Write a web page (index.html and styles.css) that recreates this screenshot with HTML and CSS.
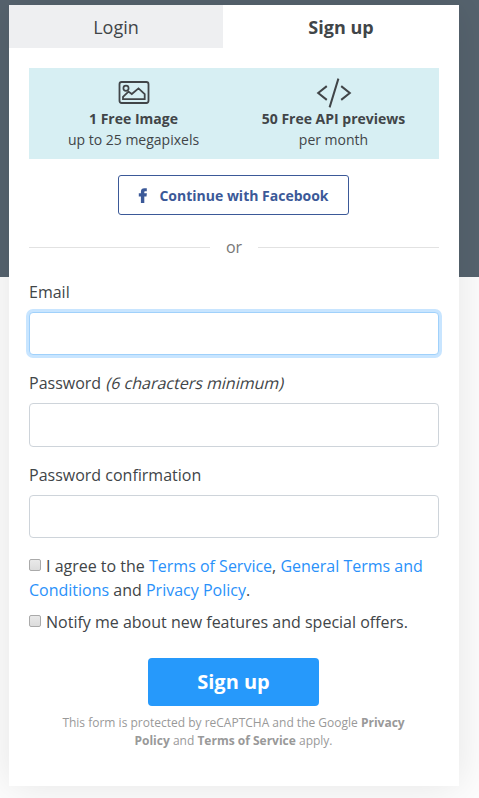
FILE: index.html
```html
<!DOCTYPE html>
<html lang="en">
<head>
<meta charset="utf-8">
<title>Sign up</title>
<link rel="stylesheet" href="styles.css">
</head>
<body>
<main class="card">
  <nav class="tabs">
    <a class="tab">Login</a>
    <a class="tab tab-active">Sign up</a>
  </nav>
  <div class="content">
    <section class="offers">
      <div class="offer">
        <svg class="offer-icon" width="32" height="30" viewBox="0 0 32 30" fill="none" stroke="#414548">
          <rect x="1.5" y="4" width="29" height="21" rx="2.2" stroke-width="1.8"/>
          <circle cx="8" cy="10.2" r="2.6" stroke-width="1.7"/>
          <path d="M5 21.1v-2.2l5.5-5.3 3.3 2.4 6.7-5.6 6.2 5.7v5z" stroke-width="1.8"/>
        </svg>
        <strong>1 Free Image</strong>
        <span>up to 25 megapixels</span>
      </div>
      <div class="offer">
        <svg class="offer-icon" width="36" height="30" viewBox="0 0 36 30" fill="none" stroke="#414548" stroke-width="2">
          <path d="M10.8 8.1L2.2 15l8.6 6.9M25.2 8.1l8.6 6.9-8.6 6.9M22.4.6l-8.8 28.8"/>
        </svg>
        <strong>50 Free API previews</strong>
        <span>per month</span>
      </div>
    </section>
    <button class="facebook" type="button">
      <svg width="10" height="15" viewBox="0 0 10 15" fill="#3b5998"><path d="M2.9 15V8.4H.8V5.3h2.1V3.7C2.9 1.4 4.2.3 6.4.3h2.4v2.9H7.5c-1 0-1.2.4-1.2 1.1v1h2.6l-.4 3.1H6.3V15z"/></svg>
      <span class="facebook-text">Continue with Facebook</span>
    </button>
    <div class="divider">or</div>
    <form class="form">
      <label for="email">Email</label>
      <input class="field field-focus" id="email" type="text">
      <label for="password">Password <em class="hint">(6 characters minimum)</em></label>
      <input class="field" id="password" type="password">
      <label for="confirm">Password confirmation</label>
      <input class="field" id="confirm" type="password">
      <p class="check"><input class="box" type="checkbox">I agree to the <a>Terms of Service</a>, <a>General Terms and Conditions</a> and <a>Privacy Policy</a>.</p>
      <p class="check"><input class="box" type="checkbox">Notify me about new features and special offers.</p>
      <button class="submit" type="button">Sign up</button>
      <p class="legal">This form is protected by reCAPTCHA and the Google <b>Privacy Policy</b> and <b>Terms of Service</b> apply.</p>
    </form>
  </div>
</main>
</body>
</html>
```
FILE: styles.css
```css
* { box-sizing: border-box; }
html { overflow: hidden; background: #fdfdfd; }
body {
  margin: 0;
  padding: 5px 20px 12px 9px;
  height: 798px;
  background: linear-gradient(#56636e 277px, #fdfdfd 277px);
  color: #414548;
  font: 16px/24px "Open Sans", sans-serif;
}
.card {
  width: 450px;
  height: 781px;
  background: #fff;
  box-shadow: 0 0 40px rgba(0, 0, 0, .1);
}
.tabs { display: flex; height: 43px; }
.tab {
  width: 214px;
  background: #eeeff1;
  font-size: 18px;
  line-height: 44px;
  text-align: center;
}
.tab-active { width: 236px; background: #fff; font-weight: 700; }
.content { padding: 20px 20px 0; }
.offers {
  display: flex;
  height: 91px;
  padding: 10px 5px 0;
  background: #d7eff3;
  font-size: 14px;
  line-height: 21px;
}
.offer {
  display: flex;
  flex: 1;
  flex-direction: column;
  align-items: center;
  margin-left: -1px;
  white-space: nowrap;
}
.offer-icon { flex: none; }
.offer strong { font-weight: 700; }
.facebook {
  display: flex;
  align-items: center;
  justify-content: center;
  gap: 11px;
  width: 231px;
  height: 40px;
  margin: 16px auto 0 89px;
  padding: 0;
  border: 1px solid #3b5998;
  border-radius: 3px;
  background: #fff;
  color: #3b5998;
  font: 700 14px/20px "Open Sans", sans-serif;
}
.facebook-text { padding-top: 2px; }
.divider {
  display: flex;
  align-items: center;
  gap: 16px;
  height: 24px;
  margin: 20px 0 21px;
  color: #777;
}
.divider::before, .divider::after { content: ""; flex: 1; height: 1px; background: #e2e2e2; }
.form label { display: block; margin-bottom: 8px; }
.hint {
  display: inline-block;
  margin-left: 2px;
  font-style: normal;
  transform: skewX(-14deg);
}
.field {
  display: block;
  width: 100%;
  height: 43.33px;
  margin: 0 0 16px;
  padding: 8px 12px;
  border: 1px solid #ced4da;
  border-radius: 4px;
  outline: none;
  background: #fff;
}
.field-focus { border-color: #a0d1fb; box-shadow: 0 0 0 3px #c8e5ff; }
.check { margin: 0 0 8px; }
.box {
  appearance: none;
  width: 12px;
  height: 12px;
  margin: 0 5px 0 0;
  border: 1px solid #aaa;
  border-radius: 2px;
  background: linear-gradient(#e9e9e9, #dcdcdc);
  vertical-align: 1px;
}
.check a { color: #2a91fa; }
.submit {
  display: block;
  width: 171px;
  height: 48px;
  margin: 24px auto 8px 119px;
  padding: 0;
  border: 0;
  border-radius: 4px;
  background: #2699fb;
  color: #fff;
  font: 700 20px/48px "Open Sans", sans-serif;
}
.legal {
  margin: 0 17px 0 16px;
  color: #999;
  font-size: 12px;
  line-height: 18px;
  text-align: center;
}
```
